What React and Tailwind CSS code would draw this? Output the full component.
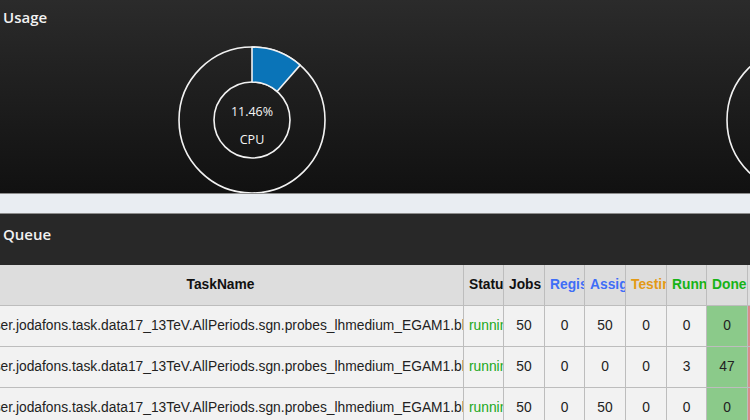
import React from "react";

function Donut({ pct, label, showText = true }) {
  const cx = 76, cy = 76, R = 73, r = 38;
  const a = (pct / 100) * 2 * Math.PI;
  const ox = cx + R * Math.sin(a), oy = cy - R * Math.cos(a);
  const ix = cx + r * Math.sin(a), iy = cy - r * Math.cos(a);
  const large = pct > 50 ? 1 : 0;
  const seg = `M${cx} ${cy - R} A${R} ${R} 0 ${large} 1 ${ox} ${oy} L${ix} ${iy} A${r} ${r} 0 ${large} 0 ${cx} ${cy - r} Z`;
  return (
    <svg width="152" height="152" viewBox="0 0 152 152" className="shrink-0">
      <circle cx={cx} cy={cy} r={R} fill="none" stroke="#f2f2f2" strokeWidth="1.6" />
      <circle cx={cx} cy={cy} r={r} fill="none" stroke="#f2f2f2" strokeWidth="1.6" />
      {pct > 0 && <path d={seg} fill="#0a74b8" stroke="#f2f2f2" strokeWidth="1.6" strokeLinejoin="round" />}
      {showText && (
        <>
          <text x={cx} y={cy - 4.5} textAnchor="middle" fill="#f5f5f5" fontSize="12.5" fontFamily="'Open Sans', sans-serif">{pct}%</text>
          <text x={cx} y={cy + 23.5} textAnchor="middle" fill="#f5f5f5" fontSize="12.5" fontFamily="'Open Sans', sans-serif">{label}</text>
        </>
      )}
    </svg>
  );
}

const headers = [
  { t: "TaskName", c: "text-[#111]" },
  { t: "Status", c: "text-[#111]" },
  { t: "Jobs", c: "text-[#111]" },
  { t: "Registered", c: "text-[#3f6ef7]" },
  { t: "Assigned", c: "text-[#3f6ef7]" },
  { t: "Testing", c: "text-[#e39a17]" },
  { t: "Running", c: "text-[#17b317]" },
  { t: "Done", c: "text-[#17b317]" },
  { t: "Failed", c: "text-[#d33]" },
];

const rows = [
  [50, 0, 50, 0, 0, 0],
  [50, 0, 0, 0, 3, 47],
  [50, 0, 50, 0, 0, 0],
];

const taskName = "user.jodafons.task.data17_13TeV.AllPeriods.sgn.probes_lhmedium_EGAM1.bkg.vprobes_vlhvloose_EGAM7.GRL_v97";

const cell = "h-[41px] leading-[40px] text-center overflow-hidden whitespace-nowrap px-[5px] border-r border-b border-[#bdbdbd]";

export default function App() {
  return (
    <div className="w-[750px] h-[420px] overflow-hidden bg-[#e9edf2] font-['Liberation_Sans',Arial,sans-serif]">
      {/* Usage panel */}
      <div className="h-[194px] overflow-hidden flex flex-col bg-gradient-to-b from-[#2b2b2b] to-[#111111] border-b border-[#8c8c8c]">
        <div className="pt-[7px] pl-[3px] leading-[20px] text-[15px] font-semibold text-[#f2f2f2] font-['Open_Sans',sans-serif]">Usage</div>
        <div className="mt-[17px] ml-[176px] flex gap-[396px]">
          <Donut pct={11.46} label="CPU" />
          <Donut pct={0} label="" showText={false} />
        </div>
      </div>

      {/* Queue panel */}
      <div className="mt-[19px] border-t border-[#8c8c8c]">
        <div className="h-[51px] bg-[#282828] pt-[10px] pl-[3px] leading-[20px] text-[15px] font-semibold text-[#f2f2f2] font-['Open_Sans',sans-serif]">Queue</div>
        <div className="-ml-[22px] grid grid-cols-[486px_40px_41px_40px_41px_41px_40px_41px_60px] text-[13.8px]">
          {headers.map((h, i) => (
            <div key={i} className={`${cell} bg-[#dddddd] font-bold ${h.c}`}>
              {h.t}
            </div>
          ))}
          {rows.map((r, ri) => (
            <React.Fragment key={ri}>
              <div className={`${cell} bg-[#f2f2f2] text-[#222] !text-left !pl-[8px]`}>{taskName}</div>
              <div className={`${cell} bg-[#f2f2f2] text-[#1aa81a]`}>running</div>
              {r.map((v, vi) => (
                <div key={vi} className={`${cell} ${vi === 5 ? "bg-[#8bca8a]" : "bg-[#f2f2f2]"} text-[#222]`}>
                  {v}
                </div>
              ))}
              <div className={`${cell} bg-[#d98a8a] text-[#222]`}>0</div>
            </React.Fragment>
          ))}
        </div>
      </div>
    </div>
  );
}
